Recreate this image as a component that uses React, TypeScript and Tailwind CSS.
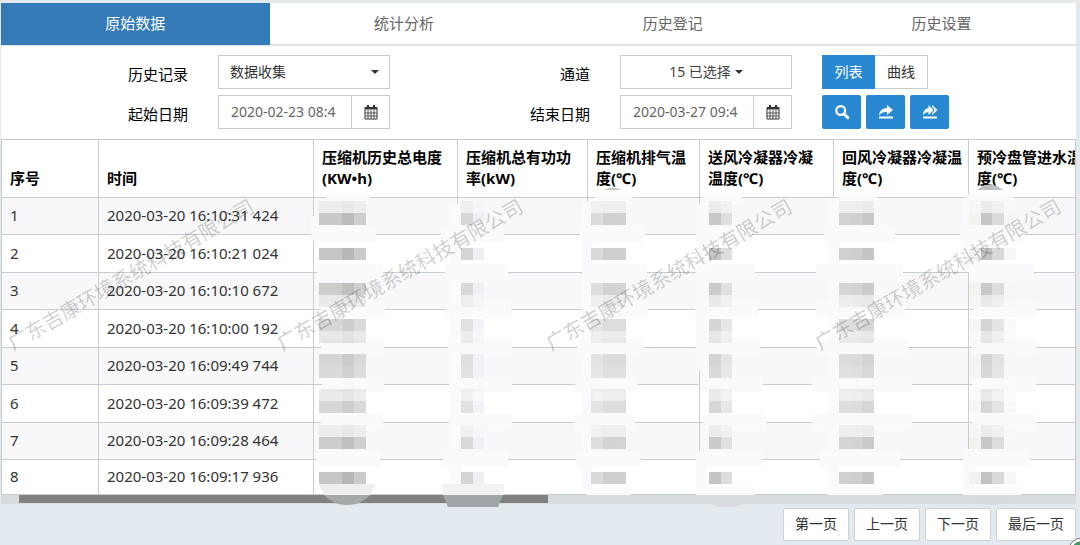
import React, { useState } from 'react'

const tabs = ['原始数据', '统计分析', '历史登记', '历史设置']

const columns = [
    { title: '序号', width: 'w-[97px]' },
    { title: '时间', width: 'w-[215px]' },
    { title: '压缩机历史总电度(KW•h)', width: 'w-[144px]' },
    { title: '压缩机总有功功率(kW)', width: 'w-[130px]' },
    { title: '压缩机排气温度(℃)', width: 'w-[112px]' },
    { title: '送风冷凝器冷凝温度(℃)', width: 'w-[134px]' },
    { title: '回风冷凝器冷凝温度(℃)', width: 'w-[135px]' },
    { title: '预冷盘管进水温度(℃)', width: 'w-[125px]' },
]

const times = [
    '2020-03-20 16:10:31 424',
    '2020-03-20 16:10:21 024',
    '2020-03-20 16:10:10 672',
    '2020-03-20 16:10:00 192',
    '2020-03-20 16:09:49 744',
    '2020-03-20 16:09:39 472',
    '2020-03-20 16:09:28 464',
    '2020-03-20 16:09:17 936',
]

const pages = ['第一页', '上一页', '下一页', '最后一页']

// hidden readings: grey blocks, one colour list per column
const blocks = [
    { x: 319, colors: ['#c6c6c4', '#c6c6c6', '#b8b8b6', '#cbcbcb'] },
    { x: 461, colors: ['#d6d4d4', '#eeeef3'] },
    { x: 591, colors: ['#dadada', '#cecece', '#cfcfcf'] },
    { x: 709, colors: ['#c6c5c5', '#dddddd'] },
    { x: 839, colors: ['#d0d0d0', '#cecece', '#c5c5c5'] },
    { x: 969, colors: ['#f1f1f0', '#c3c3c3', '#d9d9d9', '#f6f6f6'] },
]

const bands = [
    { y: 201, o: 0.25 }, { y: 213, o: 0.95 },
    { y: 248, o: 1 },
    { y: 283, o: 0.9 }, { y: 295, o: 0.3 },
    { y: 319, o: 0.7 }, { y: 331, o: 0.4 },
    { y: 354, o: 0.7 }, { y: 366, o: 0.6 },
    { y: 389, o: 0.35 }, { y: 401, o: 0.7 },
    { y: 425, o: 0.25 }, { y: 437, o: 0.9 },
    { y: 472, o: 1 },
]

// [line y, then x start / x end for each smear on that line]
const smears = [
    [197, 326, 370, 595, 633, 702, 742, 838, 877, 965, 1013],
    [234, 315, 376, 441, 504, 580, 645, 696, 752, 824, 895, 960, 1023],
    [272, 317, 383, 445, 508, 584, 647, 698, 755, 816, 903, 969, 1034],
    [309, 321, 385, 446, 511, 584, 648, 695, 758, 816, 905, 973, 1036],
    [347, 322, 384, 448, 512, 578, 643, 698, 760, 817, 909, 972, 1036],
    [384, 322, 384, 449, 512, 575, 637, 700, 763, 812, 912, 972, 1036],
    [422, 321, 383, 449, 512, 574, 635, 703, 766, 812, 912, 972, 1036],
    [459, 317, 380, 443, 508, 576, 641, 697, 762, 820, 900, 964, 1030],
]

// column lines that are wiped out: x, from, to
const wiped = [
    [311, 216, 240], [450, 204, 495], [582, 201, 488], [696, 203, 371],
    [696, 451, 495], [828, 198, 495], [963, 198, 272], [963, 449, 495],
]

const Redaction = () => (
    <svg className="pointer-events-none absolute left-0 top-0 h-[370px] w-[1075px] overflow-hidden" viewBox="1 139 1075 370" aria-hidden="true">
        <g fill="#fafafc">
            {wiped.map(([x, from, to]) => <rect key={`${x}-${from}`} x={x} y={from} width={x === 311 ? 5 : 11} height={to - from} />)}
            {smears.map(([y, ...xs]) => xs.map((x, i) => i % 2 === 0 && (
                <rect key={`${y}-${x}`} x={x} y={y === 197 ? 194 : y - 8} width={xs[i + 1] - x} height={y === 197 ? 10 : 16} rx={3} />
            )))}
        </g>
        {blocks.map((b) => bands.map((band) => b.colors.map((c, i) => (
            <rect key={`${b.x}-${band.y}-${i}`} x={b.x + i * 12 - (i > 1 ? 1 : 0)} y={band.y} width={i === 1 ? 11 : 12} height={12} fill={c} opacity={band.o} />
        ))))}
        <path d="M603 190q9-5 19 0z" fill="#c8caca" />
        <path d="M977 190q13-11 26 0z" fill="#bfc0c2" />
        <path d="M319 484h56l-5 11h-46z" fill="#eeeeee" />
        <path d="M324 495h46q-9 10-23 10t-23-10z" fill="#a6a9aa" />
        <path d="M442 484h62v11h-61z" fill="#f2f2f3" />
        <path d="M443 495h60l-5 12h-50z" fill="#a1a7a9" />
        <path d="M587 487h44v8h-44zM696 487h58v8h-58zM832 487h50v8h-50zM965 487h56v8h-56z" fill="#fafafb" />
        <path d="M703 497h48q-6 10-24 10t-24-10z" fill="#d8dcdf" />
        <path d="M972 497h37q-5 8-18 8t-19-8z" fill="#d5dade" />
    </svg>
)

const Watermark = () => (
    <div className="pointer-events-none absolute -left-1 right-1 top-[58px] flex h-[155px] items-center" aria-hidden="true">
        {[1, 2, 3, 4].map((n) => (
            <span key={n} className="flex min-w-0 flex-1 justify-center">
                <span className="-rotate-30 whitespace-nowrap font-['Liberation_Serif','Noto_Sans_CJK_SC',serif] text-[20px] text-black/20">广东吉康环境系统科技有限公司</span>
            </span>
        ))}
    </div>
)

const Caret = ({ className = '' }) => (
    <svg className={className} width="8" height="4" viewBox="0 0 8 4" fill="#333" aria-hidden="true"><path d="M0 0h8L4 4z" /></svg>
)

const CalendarIcon = () => (
    <svg width="14" height="15" viewBox="0 0 14 15" fill="none" stroke="#333" aria-hidden="true">
        <path d="M1 2.5h12v11.5H1z" />
        <path d="M1 3.5h12" strokeWidth="2" />
        <path d="M4 0v4M10 0v4" strokeWidth="2" />
        <path d="M4 5v9M7 5v9M10 5v9M1 8h12M1 11h12" strokeWidth="0.8" />
    </svg>
)

const SearchIcon = () => (
    <svg width="16" height="16" viewBox="0 0 16 16" fill="none" stroke="#fff" aria-hidden="true">
        <circle cx="6.7" cy="6.5" r="4.4" strokeWidth="2.2" />
        <path d="M10 10l3.8 3.6" strokeWidth="3" strokeLinecap="round" />
    </svg>
)

const ExportIcon = () => (
    <svg width="16" height="16" viewBox="0 0 16 16" fill="#fff" aria-hidden="true">
        <path d="M9 1l6 5-6 5V8C5.500 7.800 3 8.800 1 11.500 1.300 7.200 4 4.200 9 4z" />
        <path d="M1 12.500h14v2H1z" />
    </svg>
)

const ExportAllIcon = () => (
    <svg width="16" height="16" viewBox="0 0 16 16" fill="#fff" aria-hidden="true">
        <path d="M6.500 1l5 5-5 5V8.200C4 8.100 2.500 9 1 11.200c.2-4 2-7 5.500-7.300z" />
        <path d="M10 1l5.500 5-5.500 5V9.200L12.800 6 10 2.800z" />
        <path d="M1 12.500h14v2H1z" />
    </svg>
)

const DateField = ({ id, value, onChange }: { id: string, value: string, onChange: (v: string) => void }) => (
    <div className="flex h-[34px] w-full border border-[#ccc] bg-white">
        <input id={id} value={value} onChange={(e) => onChange(e.target.value)} className="min-w-0 flex-1 pl-3 text-sm text-[#666] outline-none" />
        <button type="button" aria-label="选择日期" className="flex w-[38px] items-center justify-center border-l border-[#ccc]"><CalendarIcon /></button>
    </div>
)

const App = () => {
    const [tab, setTab] = useState(0)
    const [view, setView] = useState('list')
    const [record, setRecord] = useState('数据收集')
    const [start, setStart] = useState('2020-02-23 08:4')
    const [end, setEnd] = useState('2020-03-27 09:4')

    return (
        <div className="relative min-h-screen w-full overflow-hidden bg-[#e2e9ef] pl-px pr-1 pt-[3px] font-['Noto_Sans','Noto_Sans_CJK_SC',sans-serif] text-[15px] text-[#333]">
            <nav className="flex h-[43px] border-b-2 border-[#dfe3e6] bg-white">
                {tabs.map((t, i) => (
                    <button key={t} onClick={() => setTab(i)} className={i === tab ? 'h-[42px] flex-1 bg-[#337ab7] pb-0.5 text-white' : 'h-[42px] flex-1 pb-0.5 text-[#666]'}>{t}</button>
                ))}
            </nav>

            <div className="grid grid-cols-[minmax(0,187fr)_minmax(0,172fr)_minmax(0,170fr)_minmax(0,172fr)_minmax(0,254fr)] items-center gap-x-[30px] gap-y-[6px] bg-white pb-[10px] pt-[9px] text-black">
                <label htmlFor="record" className="pt-1 text-right">历史记录</label>
                <div className="relative">
                    <select id="record" value={record} onChange={(e) => setRecord(e.target.value)} className="h-[34px] w-full appearance-none border border-[#ccc] bg-white px-[11px] text-sm text-[#333]">
                        <option>数据收集</option>
                    </select>
                    <Caret className="pointer-events-none absolute right-[11px] top-[15px]" />
                </div>
                <label htmlFor="channel" className="pt-1 text-right">通道</label>
                <button id="channel" type="button" className="flex h-[34px] w-full items-center justify-center gap-1 border border-[#ccc] text-sm text-[#444]">15 已选择 <Caret /></button>
                <div className="flex h-[34px] text-sm">
                    <button onClick={() => setView('list')} className={view === 'list' ? 'w-[53px] bg-[#2888d1] text-white' : 'w-[53px] border border-[#ccc] text-[#333]'}>列表</button>
                    <button onClick={() => setView('curve')} className={view === 'curve' ? 'w-[53px] bg-[#2888d1] text-white' : 'w-[53px] border border-l-0 border-[#ccc] text-[#333]'}>曲线</button>
                </div>

                <label htmlFor="start" className="pt-1 text-right">起始日期</label>
                <DateField id="start" value={start} onChange={setStart} />
                <label htmlFor="end" className="pt-1 text-right">结束日期</label>
                <DateField id="end" value={end} onChange={setEnd} />
                <div className="flex gap-[5px]">
                    <button aria-label="查询" className="flex h-[34px] w-[39px] items-center justify-center rounded-[2px] bg-[#2888d1]"><SearchIcon /></button>
                    <button aria-label="导出" className="flex h-[34px] w-[39px] items-center justify-center rounded-[2px] bg-[#2888d1]"><ExportIcon /></button>
                    <button aria-label="全部导出" className="flex h-[34px] w-[39px] items-center justify-center rounded-[2px] bg-[#2888d1]"><ExportAllIcon /></button>
                </div>
            </div>

            <div className="relative">
                <div className="overflow-hidden border-l border-r border-t border-[#c3cad2] bg-white">
                    <table className="w-[1092px] table-fixed border-separate border-spacing-0">
                        <thead>
                            <tr>
                                {columns.map((c) => (
                                    <th key={c.title} className={`${c.width} border-b border-r border-[#c8ccd4] pb-2 pl-2 pr-1.5 pt-[7px] text-left align-bottom leading-[21px] font-bold text-black`}>{c.title}</th>
                                ))}
                            </tr>
                        </thead>
                        <tbody>
                            {times.map((time, ind) => (
                                <tr key={time} className={ind === times.length - 1 ? 'h-[35px]' : 'h-[37px] odd:bg-[#f8f8fa] even:h-[38px]'}>
                                    <td className="border-b border-r border-[#c8ccd4] px-2 pb-0.5 pt-0 leading-5">{ind + 1}</td>
                                    <td className="border-b border-r border-[#c8ccd4] px-2 pb-0.5 pt-0 leading-5">{time}</td>
                                    {columns.slice(2).map((c) => <td key={c.title} className="border-b border-r border-[#c8ccd4]"></td>)}
                                </tr>
                            ))}
                        </tbody>
                    </table>
                </div>
                <div className="h-[9px] bg-[#d9dcdf] pl-[18px]">
                    <div className="h-2 w-[50%] bg-[#808182]"></div>
                </div>
                <Redaction />
                <Watermark />
            </div>

            <div className="flex justify-end gap-[5px] pt-1 text-sm">
                {pages.map((p) => (
                    <button key={p} className="h-[33px] rounded-[2px] border border-[#ccd2d6] bg-white px-[11px] pb-0.5 text-[#333]">{p}</button>
                ))}
            </div>
            <svg className="absolute bottom-0 right-0" width="12" height="7" viewBox="0 0 12 7" aria-hidden="true">
                <circle cx="14" cy="14" r="14" fill="#fff" stroke="#777" />
                <circle cx="14" cy="14" r="11" fill="#3f9a63" />
            </svg>
        </div>
    )
}

export default App
